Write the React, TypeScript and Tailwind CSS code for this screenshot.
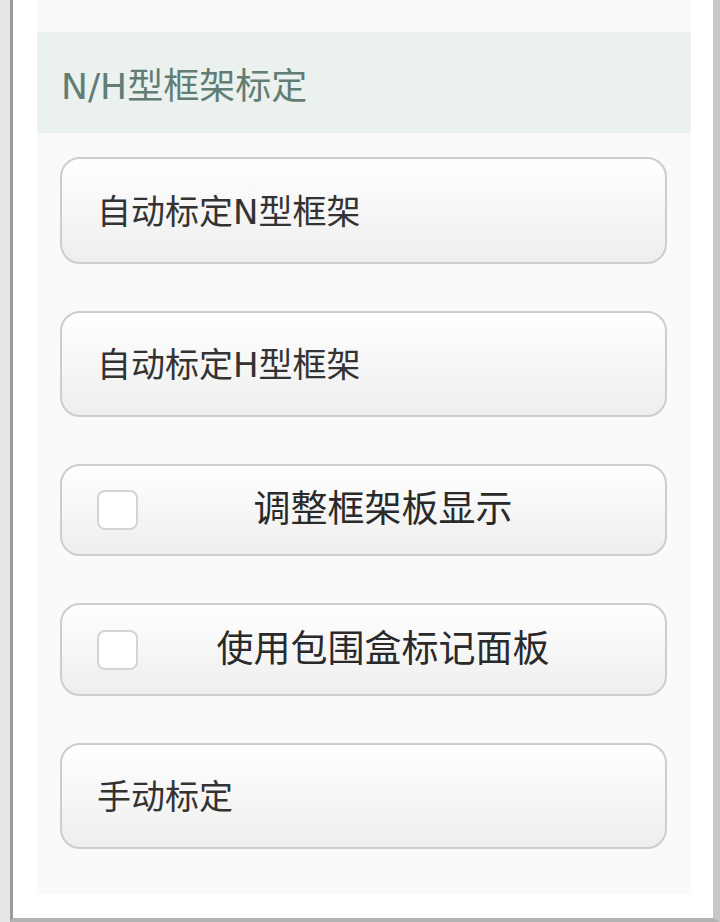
const font = {
  fontFamily: '"DejaVu Sans", "Noto Sans CJK SC", sans-serif',
};

type ActionButtonProps = {
  readonly label: string;
  readonly height: string;
};

const ActionButton = ({ label, height }: ActionButtonProps) => (
  <button
    type="button"
    className={`flex w-[607px] items-center rounded-[20px] border-2 border-[#cdcdcd] bg-gradient-to-b from-white to-[#eeeeee] pl-[35px] pt-[3px] text-left text-[34px] text-[#333333] ${height}`}
  >
    {label}
  </button>
);

const CheckButton = ({ label, height }: ActionButtonProps) => (
  <label
    className={`flex w-[607px] items-center rounded-[20px] border-2 border-[#cdcdcd] bg-gradient-to-b from-white to-[#eeeeee] pl-[35px] pr-[37px] text-[37px] text-[#2a2a2a] ${height}`}
  >
    <span className="h-[40px] w-[41px] shrink-0 rounded-[8px] border-2 border-[#d4d4d4] bg-white" />
    <span className="flex-1 text-center">{label}</span>
  </label>
);

const App = () => (
  <div className="h-[922px] w-[720px] bg-[#e6e6e6] pl-[10px]" style={font}>
    <div className="h-[922px] border-b-4 border-l-[3px] border-r-[7px] border-b-[#b4b4b4] border-l-[#9c9c9c] border-r-[#c8c8c8] bg-white">
      <div className="ml-[24px] flex h-[894px] w-[654px] flex-col bg-[#fafafa] pt-[32px]">
        <div className="flex h-[101px] items-center bg-[#ebf1ee] pl-[24px] pt-[8px] text-[36px] text-[#617d74]">
          N/H型框架标定
        </div>
        <div className="mt-[24px] flex flex-col gap-[47px] pl-[23px]">
          <ActionButton label="自动标定N型框架" height="h-[107px]" />
          <ActionButton label="自动标定H型框架" height="h-[106px]" />
          <CheckButton label="调整框架板显示" height="h-[92px]" />
          <CheckButton label="使用包围盒标记面板" height="h-[93px]" />
          <ActionButton label="手动标定" height="h-[106px]" />
        </div>
      </div>
    </div>
  </div>
);

export default App;
